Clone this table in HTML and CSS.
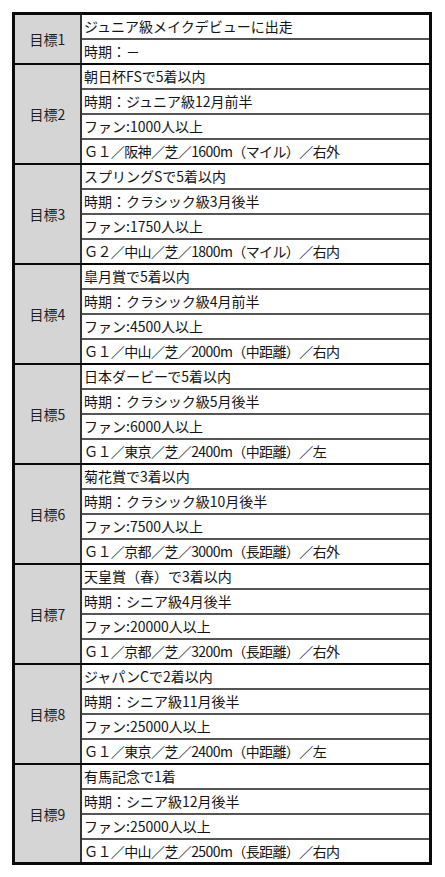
FILE: index.html
```html
<!DOCTYPE html>
<html lang="ja">
<head>
<meta charset="utf-8">
<link rel="stylesheet" href="styles.css">
</head>
<body>
<div class="table">
  <div class="goal">
    <div class="label">目標1</div>
    <div class="rows">
      <div class="row">ジュニア級メイクデビューに出走</div>
      <div class="row">時期：－</div>
    </div>
  </div>
  <div class="goal">
    <div class="label">目標2</div>
    <div class="rows">
      <div class="row">朝日杯FSで5着以内</div>
      <div class="row">時期：ジュニア級12月前半</div>
      <div class="row">ファン:1000人以上</div>
      <div class="row race">Ｇ１／阪神／芝／1600m（マイル）／右外</div>
    </div>
  </div>
  <div class="goal">
    <div class="label">目標3</div>
    <div class="rows">
      <div class="row">スプリングSで5着以内</div>
      <div class="row">時期：クラシック級3月後半</div>
      <div class="row">ファン:1750人以上</div>
      <div class="row race">Ｇ２／中山／芝／1800m（マイル）／右内</div>
    </div>
  </div>
  <div class="goal">
    <div class="label">目標4</div>
    <div class="rows">
      <div class="row">皐月賞で5着以内</div>
      <div class="row">時期：クラシック級4月前半</div>
      <div class="row">ファン:4500人以上</div>
      <div class="row race">Ｇ１／中山／芝／2000m（中距離）／右内</div>
    </div>
  </div>
  <div class="goal">
    <div class="label">目標5</div>
    <div class="rows">
      <div class="row">日本ダービーで5着以内</div>
      <div class="row">時期：クラシック級5月後半</div>
      <div class="row">ファン:6000人以上</div>
      <div class="row race">Ｇ１／東京／芝／2400m（中距離）／左</div>
    </div>
  </div>
  <div class="goal">
    <div class="label">目標6</div>
    <div class="rows">
      <div class="row">菊花賞で3着以内</div>
      <div class="row">時期：クラシック級10月後半</div>
      <div class="row">ファン:7500人以上</div>
      <div class="row race">Ｇ１／京都／芝／3000m（長距離）／右外</div>
    </div>
  </div>
  <div class="goal">
    <div class="label">目標7</div>
    <div class="rows">
      <div class="row">天皇賞（春）で3着以内</div>
      <div class="row">時期：シニア級4月後半</div>
      <div class="row">ファン:20000人以上</div>
      <div class="row race">Ｇ１／京都／芝／3200m（長距離）／右外</div>
    </div>
  </div>
  <div class="goal">
    <div class="label">目標8</div>
    <div class="rows">
      <div class="row">ジャパンCで2着以内</div>
      <div class="row">時期：シニア級11月後半</div>
      <div class="row">ファン:25000人以上</div>
      <div class="row race">Ｇ１／東京／芝／2400m（中距離）／左</div>
    </div>
  </div>
  <div class="goal">
    <div class="label">目標9</div>
    <div class="rows">
      <div class="row">有馬記念で1着</div>
      <div class="row">時期：シニア級12月後半</div>
      <div class="row">ファン:25000人以上</div>
      <div class="row race">Ｇ１／中山／芝／2500m（長距離）／右内</div>
    </div>
  </div>
</div>
</body>
</html>
```

FILE: styles.css
```css
html, body {
  margin: 0;
  padding: 0;
  background: #ffffff;
}

body {
  font-family: "Noto Sans CJK JP", "Noto Sans", sans-serif;
  font-size: 14px;
  color: #141414;
}

.table {
  margin: 12px 0 0 12px;
  width: 420px;
  box-sizing: border-box;
  border: 3px solid #0a0a0a;
  display: flex;
  flex-direction: column;
}

.goal {
  display: grid;
  grid-template-columns: 67px 1fr;
  border-top: 2px solid #0a0a0a;
}

.goal:first-child {
  border-top: none;
}

.goal:last-child .row:last-child {
  height: 22px;
  line-height: 22px;
}

.label {
  background: #d5d5d5;
  border-right: 2px solid #333333;
  display: flex;
  align-items: center;
  justify-content: center;
  color: #1e1e1e;
}

.rows {
  display: flex;
  flex-direction: column;
}

.row {
  height: 23px;
  line-height: 23px;
  padding-left: 2px;
  white-space: nowrap;
  border-top: 2px solid #555555;
}

.row:first-child {
  border-top: none;
}

.race {
  letter-spacing: -0.6px;
}
```
